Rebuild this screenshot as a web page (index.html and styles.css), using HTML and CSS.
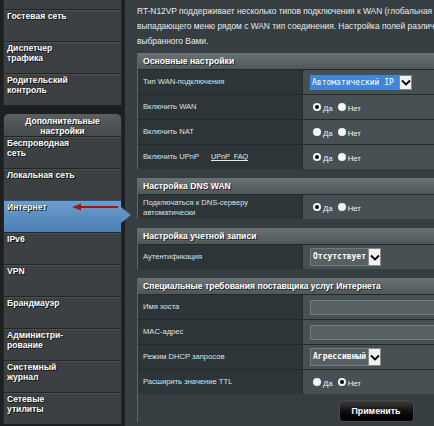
FILE: index.html
```html
<!DOCTYPE html>
<html lang="ru">
<head>
<meta charset="utf-8">
<title>RT-N12VP — Интернет</title>
<link rel="stylesheet" href="styles.css">
</head>
<body>
<div class="page">
  <nav class="sidebar">
    <div class="group group-top">
      <div class="item item-partial"></div>
      <div class="item">Гостевая сеть</div>
      <div class="item">Диспетчер<br>трафика</div>
      <div class="item">Родительский<br>контроль</div>
    </div>
    <div class="group group-adv">
      <div class="group-head">Дополнительные<br>настройки</div>
      <div class="item">Беспроводная<br>сеть</div>
      <div class="item">Локальная сеть</div>
      <div class="item active">Интернет
        <svg class="annot-arrow" width="48" height="8" viewBox="0 0 48 8"><line x1="6" y1="4" x2="46" y2="4" stroke="#9a1a1c" stroke-width="2"/><polygon points="0,4 9,0.5 9,7.5" fill="#9a1a1c"/></svg>
      </div>
      <div class="item">IPv6</div>
      <div class="item">VPN</div>
      <div class="item">Брандмауэр</div>
      <div class="item">Администри-<br>рование</div>
      <div class="item">Системный<br>журнал</div>
      <div class="item">Сетевые<br>утилиты</div>
    </div>
  </nav>

  <main class="content">
    <p class="intro">RT-N12VP поддерживает несколько типов подключения к WAN (глобальная сеть). Выберите<br>выпадающего меню рядом с WAN тип соединения. Настройка полей различается в<br>выбранного Вами.</p>

    <section class="block">
      <div class="block-head">Основные настройки</div>
      <div class="row">
        <div class="label">Тип WAN-подключения</div>
        <div class="value"><span class="select select-blue"><span class="select-text">Автоматический IP</span><span class="select-btn"><svg width="10" height="7" viewBox="0 0 10 7"><path d="M1 1.5 L5 5.5 L9 1.5" fill="none" stroke="#000" stroke-width="1.8"/></svg></span></span></div>
      </div>
      <div class="row">
        <div class="label">Включить WAN</div>
        <div class="value"><span class="radio checked"></span><span class="rlabel">Да</span><span class="radio"></span><span class="rlabel">Нет</span></div>
      </div>
      <div class="row">
        <div class="label">Включить NAT</div>
        <div class="value"><span class="radio"></span><span class="rlabel">Да</span><span class="radio"></span><span class="rlabel">Нет</span></div>
      </div>
      <div class="row">
        <div class="label">Включить UPnP <a class="faq">UPnP&nbsp;&nbsp;FAQ</a></div>
        <div class="value"><span class="radio checked"></span><span class="rlabel">Да</span><span class="radio"></span><span class="rlabel">Нет</span></div>
      </div>
    </section>

    <section class="block">
      <div class="block-head">Настройка DNS WAN</div>
      <div class="row">
        <div class="label two">Подключаться к DNS-серверу<br>автоматически</div>
        <div class="value"><span class="radio checked"></span><span class="rlabel">Да</span><span class="radio"></span><span class="rlabel">Нет</span></div>
      </div>
    </section>

    <section class="block">
      <div class="block-head">Настройка учетной записи</div>
      <div class="row">
        <div class="label">Аутентификация</div>
        <div class="value"><span class="select select-grey"><span class="select-text">Отсутствует</span><span class="select-btn"><svg width="10" height="7" viewBox="0 0 10 7"><path d="M1 1.5 L5 5.5 L9 1.5" fill="none" stroke="#000" stroke-width="1.8"/></svg></span></span></div>
      </div>
    </section>

    <section class="block">
      <div class="block-head">Специальные требования поставщика услуг Интернета</div>
      <div class="row">
        <div class="label">Имя хоста</div>
        <div class="value"><span class="input"></span></div>
      </div>
      <div class="row">
        <div class="label">MAC-адрес</div>
        <div class="value"><span class="input"></span></div>
      </div>
      <div class="row">
        <div class="label">Режим DHCP запросов</div>
        <div class="value"><span class="select select-grey"><span class="select-text">Агрессивный</span><span class="select-btn"><svg width="10" height="7" viewBox="0 0 10 7"><path d="M1 1.5 L5 5.5 L9 1.5" fill="none" stroke="#000" stroke-width="1.8"/></svg></span></span></div>
      </div>
      <div class="row">
        <div class="label">Расширить значение TTL</div>
        <div class="value"><span class="radio"></span><span class="rlabel">Да</span><span class="radio checked"></span><span class="rlabel">Нет</span></div>
      </div>
      <div class="actions"><button class="apply">Применить</button></div>
    </section>
  </main>
</div>
</body>
</html>
```

FILE: styles.css
```css
html, body {
  margin: 0;
  padding: 0;
  height: 100%;
  background: #1d2021;
  overflow: hidden;
}

.page {
  display: flex;
  height: 426px;
  font-family: "Liberation Sans", Arial, sans-serif;
}

.sidebar {
  width: 119px;
  margin-left: 3px;
  margin-right: 3px;
  flex: none;
  position: relative;
  z-index: 2;
  display: flex;
  flex-direction: column;
  gap: 8px;
}

.group {
  background: #3c4043;
  border-left: 1px solid #25282a;
  border-right: 1px solid #25282a;
}

.item {
  position: relative;
  box-sizing: border-box;
  height: 32px;
  padding: 1px 2px 0 3px;
  border-top: 1px solid #222527;
  box-shadow: inset 0 1px 0 #4a4f52;
  color: #fff;
  font-weight: bold;
  font-size: 8.6px;
  line-height: 10px;
  text-shadow: 0 0 1px #111, 1px 1px 0 #1a1a1a;
}

.item-partial {
  height: 9px;
  border-top: none;
  box-shadow: none;
}

.group-top {
  border-bottom: 1px solid #222527;
}

.group-head {
  box-sizing: border-box;
  height: 22px;
  padding-top: 2px;
  border-radius: 5px 5px 0 0;
  background: linear-gradient(#5a5f62, #44494c);
  color: #fff;
  text-align: center;
  font-weight: bold;
  font-size: 8.6px;
  line-height: 10px;
  text-shadow: 1px 1px 0 #1a1a1a;
}

.group-adv {
  border-radius: 5px 5px 0 0;
}

.item.active {
  background: linear-gradient(#6d9dcc, #4a7fb4);
  box-shadow: none;
  border-top: 1px solid #2d4f73;
}

.item.active::after {
  content: "";
  position: absolute;
  right: -10px;
  top: 6px;
  border-left: 10px solid #5f91c2;
  border-top: 8px solid transparent;
  border-bottom: 8px solid transparent;
}

.annot-arrow {
  position: absolute;
  left: 68px;
  top: 2px;
}

.content {
  flex: 1;
  min-width: 0;
  background: #373e41;
  padding: 4px 0 0 12px;
  overflow: hidden;
}

.intro {
  margin: 0 0 4px 0;
  white-space: nowrap;
  color: #e8eaeb;
  font-size: 8.4px;
  line-height: 15px;
}

.block {
  width: 476px;
  margin-bottom: 9px;
  border-left: 1px solid #5d6669;
}

.block-head {
  box-sizing: border-box;
  height: 16px;
  padding: 3px 0 0 5px;
  background: linear-gradient(#697275, #4f575a);
  color: #fff;
  font-weight: bold;
  font-size: 8.6px;
  line-height: 10px;
  text-shadow: 1px 1px 0 #222;
}

.row {
  display: flex;
  height: 25px;
  border-top: 1px solid #24292b;
  box-sizing: border-box;
}

.label {
  width: 165px;
  flex: none;
  box-sizing: border-box;
  padding-left: 5px;
  display: flex;
  align-items: center;
  background: #2e3538;
  color: #dde1e2;
  font-size: 7.6px;
  line-height: 9.5px;
  border-right: 1px solid #24292b;
}

.label.two {
  display: block;
  padding-top: 3px;
}

.faq {
  margin-left: 12px;
  color: #e6e9ea;
  text-decoration: underline;
  font-size: 7.2px;
}

.value {
  flex: 1;
  display: flex;
  align-items: center;
  padding-left: 7px;
  background: #475053;
  color: #fff;
  font-size: 7.8px;
}

.radio {
  box-sizing: border-box;
  width: 8px;
  height: 8px;
  border-radius: 50%;
  background: #f4f4f4;
  margin-left: 3px;
  margin-right: 2px;
  position: relative;
}

.radio.checked::after {
  content: "";
  position: absolute;
  left: 2px;
  top: 2px;
  width: 4px;
  height: 4px;
  border-radius: 50%;
  background: #000;
}

.rlabel {
  margin-right: 2px;
  margin-top: 2px;
  color: #f2f2f2;
}

.select {
  display: flex;
  align-items: stretch;
}

.select-text {
  display: block;
  overflow: hidden;
  white-space: nowrap;
  font-family: "DejaVu Sans Mono", monospace;
  color: #fff;
}

.select-blue .select-text {
  width: 87px;
  height: 15px;
  line-height: 15px;
  padding-left: 2px;
  background: #3d86d8;
  font-size: 8px;
}

.select-grey .select-text {
  width: 55px;
  height: 16px;
  line-height: 16px;
  padding-left: 2px;
  background: #586063;
  border: 1px solid #727b7e;
  border-right: none;
  font-weight: bold;
  font-size: 8px;
}

.select-btn {
  width: 13px;
  display: flex;
  align-items: center;
  justify-content: center;
  background: #f1f1f1;
  border: 1px solid #8a8a8a;
  box-sizing: border-box;
}

.select-grey .select-btn {
  height: 18px;
}

.input {
  display: block;
  width: 160px;
  height: 15px;
  box-sizing: border-box;
  background: #566063;
  border: 1px solid #737d80;
}

.actions {
  display: flex;
  justify-content: center;
  padding-top: 6px;
  background: #373e41;
}

.apply {
  width: 75px;
  height: 22px;
  border: 1px solid #4a4a4a;
  border-radius: 4px;
  background: linear-gradient(#3c3c3c, #0c0c0c 55%, #000);
  color: #fff;
  font-family: "Liberation Sans", Arial, sans-serif;
  font-weight: bold;
  font-size: 8.8px;
  padding: 0;
}
```
